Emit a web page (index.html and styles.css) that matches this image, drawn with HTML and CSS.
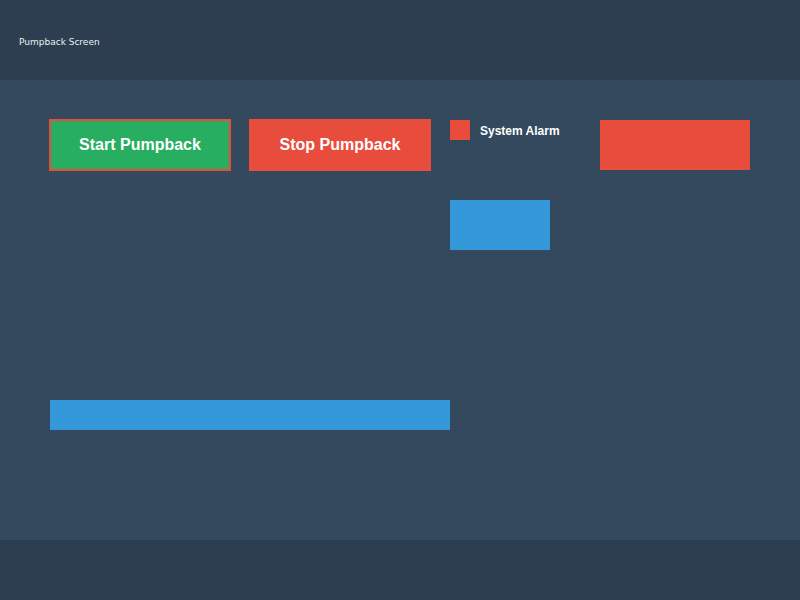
FILE: index.html
```html
<!DOCTYPE html>
<html>
<head>
<meta charset="utf-8">
<link rel="stylesheet" href="styles.css">
</head>
<body>
<div class="screen">
  <header class="header"><span class="title">Pumpback Screen</span></header>
  <main class="canvas">
    <button class="btn btn-start">Start Pumpback</button>
    <button class="btn btn-stop">Stop Pumpback</button>
    <div class="alarm"><span class="alarm-led"></span><span class="alarm-label">System Alarm</span></div>
    <div class="alarm-panel"></div>
    <div class="blue-box"></div>
    <div class="blue-bar"></div>
  </main>
  <footer class="footer"></footer>
</div>
</body>
</html>
```
FILE: styles.css
```css
html, body { margin: 0; padding: 0; }
body { background: #34495e; font-family: "Liberation Sans", Arial, sans-serif; }
.screen { width: 800px; height: 600px; display: flex; flex-direction: column; }
.header { height: 80px; background: #2c3e50; display: flex; align-items: center; padding-left: 19px; }
.title { color: #ecf0f1; font-family: "DejaVu Sans", sans-serif; font-size: 9px; margin-top: 3px; }
.canvas {
  flex: 1;
  box-sizing: border-box;
  padding: 40px 50px;
  display: grid;
  grid-template-columns: 200px 200px 150px 150px;
  grid-template-rows: 50px 30px 50px 150px 30px;
  align-content: start;
}
.footer { height: 60px; background: #2c3e50; }
.btn {
  grid-row: 1;
  box-sizing: border-box;
  width: 182px; height: 52px; margin: -1px;
  border: 2px solid #e74c3c;
  color: #fff; font-family: "Liberation Sans", Arial, sans-serif; font-weight: bold; font-size: 16px;
  padding: 0; cursor: pointer;
}
.btn-start { grid-column: 1; background: #27ae60; }
.btn-stop { grid-column: 2; background: #e74c3c; }
.alarm { grid-column: 3; grid-row: 1; display: flex; align-items: center; gap: 10px; align-self: start; }
.alarm-led { width: 20px; height: 20px; background: #e74c3c; }
.alarm-label { color: #fff; font-weight: bold; font-size: 12px; margin-top: 2px; }
.alarm-panel { grid-column: 4; grid-row: 1; background: #e74c3c; }
.blue-box { grid-column: 3; grid-row: 3; width: 100px; background: #3498db; }
.blue-bar { grid-column: 1 / span 2; grid-row: 5; background: #3498db; }
```
